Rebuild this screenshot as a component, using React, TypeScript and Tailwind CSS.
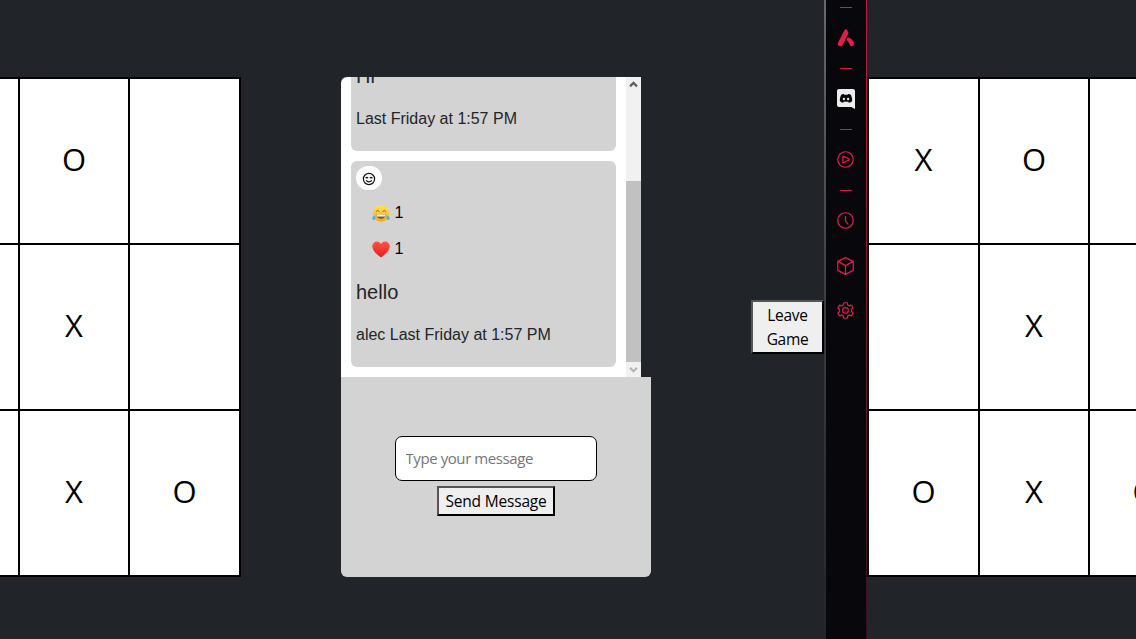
import React from "react";

const SEGOE = "font-['Open_Sans','Noto_Sans',sans-serif]";
const ARIAL = "font-['Liberation_Sans',Arial,sans-serif]";

function Cell({ mark }: { mark: string }) {
  return (
    <div className="flex items-center justify-center bg-white pb-1 text-[31px] leading-none text-black">
      {mark}
    </div>
  );
}

function Board({ marks, className }: { marks: string[]; className: string }) {
  return (
    <div className={`grid h-[500px] shrink-0 grid-rows-3 gap-0.5 bg-black p-0.5 ${className}`}>
      {marks.map((m, i) => (
        <Cell key={i} mark={m} />
      ))}
    </div>
  );
}

function JoyIcon() {
  return (
    <svg width="18" height="17" viewBox="0 0 18 17">
      <defs>
        <linearGradient id="face" x1="0" y1="0" x2="0" y2="1">
          <stop offset="0" stopColor="#ffe552" />
          <stop offset="1" stopColor="#f5a51c" />
        </linearGradient>
      </defs>
      <circle cx="9" cy="8.5" r="8.3" fill="url(#face)" />
      <path d="M4 6.4 Q5.6 4.6 7.3 6.5 M10.7 6.5 Q12.4 4.6 14 6.4" fill="none" stroke="#8a5a14" strokeWidth=".9" />
      <path d="M4.2 9.4 H13.8 Q13 13.8 9 13.8 Q5 13.8 4.2 9.4Z" fill="#8a521c" />
      <path d="M4.5 9.5 H13.5 L13 11.5 H5Z" fill="#fff" />
      <path d="M3.5 10.4 Q.3 11 .1 13.2 Q.3 15.2 2 14.9 Q3.8 14 3.5 10.4Z M14.5 10.4 Q17.7 11 17.9 13.2 Q17.7 15.2 16 14.9 Q14.2 14 14.5 10.4Z" fill="#45b9ea" />
    </svg>
  );
}

function HeartIcon() {
  return (
    <svg width="18" height="17" viewBox="0 0 18 17">
      <defs>
        <linearGradient id="heart" x1="0" y1="0" x2="0" y2="1">
          <stop offset="0" stopColor="#ff5548" />
          <stop offset="1" stopColor="#e51d1d" />
        </linearGradient>
      </defs>
      <path d="M9 16.6 C6.2 14.2 .3 10.3 .3 5.3 C.3 2.6 2.4 .4 4.8 .4 C6.7 .4 8.2 1.5 9 3.1 C9.8 1.5 11.3 .4 13.2 .4 C15.6 .4 17.7 2.6 17.7 5.3 C17.7 10.3 11.8 14.2 9 16.6Z" fill="url(#heart)" />
    </svg>
  );
}

function SmileIcon() {
  return (
    <svg width="14" height="14" viewBox="0 0 14 14" fill="none" stroke="#111" strokeWidth="1.2">
      <circle cx="7" cy="7" r="5.6" />
      <path d="M3.6 6.1 Q4.9 4.9 6.1 6.1 M7.9 6.1 Q9.1 4.9 10.4 6.1 M4.1 8.3 Q7 11.3 9.9 8.3" />
    </svg>
  );
}

function Reaction({ icon, count, className }: { icon: React.ReactNode; count: number; className: string }) {
  return (
    <div className={`flex h-6 items-center gap-[4.5px] pl-4 text-base text-black ${className}`}>
      {icon}
      <span>{count}</span>
    </div>
  );
}

function Scrollbar() {
  return (
    <div className="flex h-full w-[15px] flex-col bg-[#f1f1f1]">
      <svg width="15" height="15" viewBox="0 0 15 15">
        <path d="M4 9.4 L7.5 5.9 L11 9.4" fill="none" stroke="#606060" strokeWidth="2.2" />
      </svg>
      <div className="mt-[89px] h-[181px] bg-[#c1c1c1]" />
      <svg width="15" height="15" viewBox="0 0 15 15">
        <path d="M4 5.7 L7.5 9.2 L11 5.7" fill="none" stroke="#b5b5b5" strokeWidth="2.2" />
      </svg>
    </div>
  );
}

function Chat() {
  return (
    <div className="mt-[77px] ml-[100px] w-[310px] shrink-0">
      <div className={`flex h-[300px] w-[300px] overflow-hidden rounded-tl-[6px] bg-white text-[#212529] ${ARIAL}`}>
        <div className="flex h-full w-[285px] flex-col justify-end gap-2.5 px-2.5 pb-2.5">
          <div className="shrink-0 rounded-[6px] bg-[#d3d3d3] p-[5px]">
            <p className="mb-4 text-xl leading-[30px]">Hi</p>
            <p className="mb-[15px] text-base leading-6">Last Friday at 1:57 PM</p>
          </div>
          <div className="h-[206px] shrink-0 rounded-[6px] bg-[#d3d3d3] p-[5px]">
            <button className="flex h-6 w-[26px] items-center justify-center rounded-full bg-white pt-0.5">
              <SmileIcon />
            </button>
            <Reaction icon={<JoyIcon />} count={1} className="mt-[11px]" />
            <Reaction icon={<HeartIcon />} count={1} className="mt-3" />
            <p className="mt-4 text-xl leading-[30px]">hello</p>
            <p className="mt-4 text-base leading-6">alec Last Friday at 1:57 PM</p>
          </div>
        </div>
        <Scrollbar />
      </div>
      <div className="flex h-[200px] flex-col items-center rounded-b-[6px] bg-[#d3d3d3] pt-[59px]">
        <input
          type="text"
          placeholder="Type your message"
          className="mr-px h-[45px] w-[202px] rounded-[7px] border border-black bg-white px-2.5 pb-0.5 text-[15px] tracking-[-0.42px] placeholder:text-[#757575]"
        />
        <button className="mt-[5px] h-[30px] w-[118px] border-2 border-t-[#555] border-r-black border-b-black border-l-[#555] bg-[#efefef] text-[15.5px] leading-6 tracking-[-0.18px] whitespace-nowrap text-black">
          Send Message
        </button>
      </div>
    </div>
  );
}

function Separator() {
  return <div className="h-px w-3 shrink-0 bg-[#d51c45]" />;
}

function Slot({ children, className }: { children: React.ReactNode; className: string }) {
  return <div className={`flex w-full shrink-0 items-center justify-center ${className}`}>{children}</div>;
}

const line = { fill: "none", stroke: "#e11d48", strokeWidth: 1.3, strokeLinejoin: "round", strokeLinecap: "round" } as const;

function Sidebar() {
  return (
    <aside className="flex h-full w-[43px] shrink-0">
      <div className="w-0.5 bg-linear-to-b from-[#69696b] via-[#3b3c40] to-[#242529]" />
      <div className="flex w-10 flex-col items-center bg-[#08070c] pt-[7px]">
        <Separator />
        <Slot className="h-[60px]">
          <svg width="18" height="18" viewBox="0 0 18 18" fill="#e11d48">
            <path d="M7.5 1 Q9 -.6 10.2 1.1 L11 2.9 Q11.5 4 11 5.2 L5.7 15.9 Q4.9 17.3 3.6 17.3 Q.2 17.1 .9 14Z" />
            <path d="M10.1 8.9 Q11 8.2 12.6 8.9 Q16.2 10.5 17 14.6 Q17 17.2 15.2 17.2 Q13.2 17 12.3 14.9 Q11.7 12.9 10.3 11.7 Q8.8 10.4 10.1 8.9Z" />
          </svg>
        </Slot>
        <Separator />
        <Slot className="h-[60px]">
          <svg width="18" height="20" viewBox="0 0 18 20">
            <path d="M2 0 H16 Q18 0 18 2 V20 L14.2 18 H2 Q0 18 0 16 V2 Q0 0 2 0Z" fill="#ececec" />
            <path
              d="M6.9 5 Q4.8 5.2 4 6 Q2.8 8.6 2.8 12 Q4 13.6 6.2 13.7 L6.9 12.5 Q9 13 11.1 12.5 L11.8 13.7 Q14 13.6 15.2 12 Q15.2 8.6 14 6 Q13.2 5.2 11.1 5 L10.6 5.8 H7.4Z"
              fill="#08070c"
            />
            <ellipse cx="6.9" cy="10" rx="1.1" ry="1.2" fill="#ececec" />
            <ellipse cx="11.1" cy="10" rx="1.1" ry="1.2" fill="#ececec" />
          </svg>
        </Slot>
        <Separator />
        <Slot className="h-[60px] pr-px pb-px">
          <svg width="17" height="17" viewBox="0 0 18 18" {...line}>
            <circle cx="9" cy="9" r="8.2" />
            <path d="M6.2 6.1 Q6.2 5.4 7 5.7 L12.7 8.4 Q13.3 9 12.7 9.5 L7 12.3 Q6.2 12.6 6.2 11.9Z" />
          </svg>
        </Slot>
        <Separator />
        <Slot className="mt-[7px] h-[45px] pr-px">
          <svg width="17" height="17" viewBox="0 0 18 18" {...line}>
            <circle cx="9" cy="9" r="8.2" />
            <path d="M9 4.7 V9.4 L11.5 12.5" />
          </svg>
        </Slot>
        <Slot className="h-[45px] pr-px">
          <svg width="17" height="18" viewBox="0 0 18 18" preserveAspectRatio="none" {...line}>
            <path d="M9 .6 L17.2 4.4 V13.3 L9 17.4 L.8 13.3 V4.4Z M.8 4.4 L9 8.7 L17.2 4.4 M9 8.7 V17.4" />
          </svg>
        </Slot>
        <Slot className="h-[45px] pr-px">
          <svg width="17" height="17" viewBox="0 0 18 18" {...line}>
            <circle cx="9" cy="9" r="3" />
            <path d="M7.2 .8 H10.8 L11.3 3.1 L13 4.1 L15.2 3.3 L17.1 6.4 L15.3 8 V10 L17.1 11.6 L15.2 14.7 L13 13.9 L11.3 14.9 L10.8 17.2 H7.2 L6.7 14.9 L5 13.9 L2.8 14.7 L.9 11.6 L2.7 10 V8 L.9 6.4 L2.8 3.3 L5 4.1 L6.7 3.1Z" />
          </svg>
        </Slot>
      </div>
      <div className="w-px bg-linear-to-b from-[#c9193f] via-[#85132d] to-[#3a0d19]" />
    </aside>
  );
}

export default function App() {
  return (
    <div className={`flex h-[639px] w-[1136px] overflow-hidden bg-[#212529] ${SEGOE}`}>
      <main className="flex h-full w-[824px] shrink-0">
        <div className="flex h-full w-[241px] shrink-0 justify-end overflow-hidden pt-[77px]">
          <Board
            className="w-[333px] grid-cols-[108px_108px_109px]"
            marks={["", "O", "", "", "X", "", "", "X", "O"]}
          />
        </div>
        <Chat />
        <button className="mt-[300px] ml-[100px] h-[54px] w-[73px] border-2 border-t-[#555] border-r-black border-b-black border-l-[#555] bg-[#efefef] text-[15.5px] leading-6 tracking-[-0.3px] text-black">
          Leave Game
        </button>
      </main>
      <Sidebar />
      <div className="h-full min-w-0 flex-1 overflow-hidden pt-[77px]">
        <Board
          className="w-[333px] grid-cols-[109px_108px_109px]"
          marks={["X", "O", "", "", "X", "", "O", "X", "O"]}
        />
      </div>
    </div>
  );
}
